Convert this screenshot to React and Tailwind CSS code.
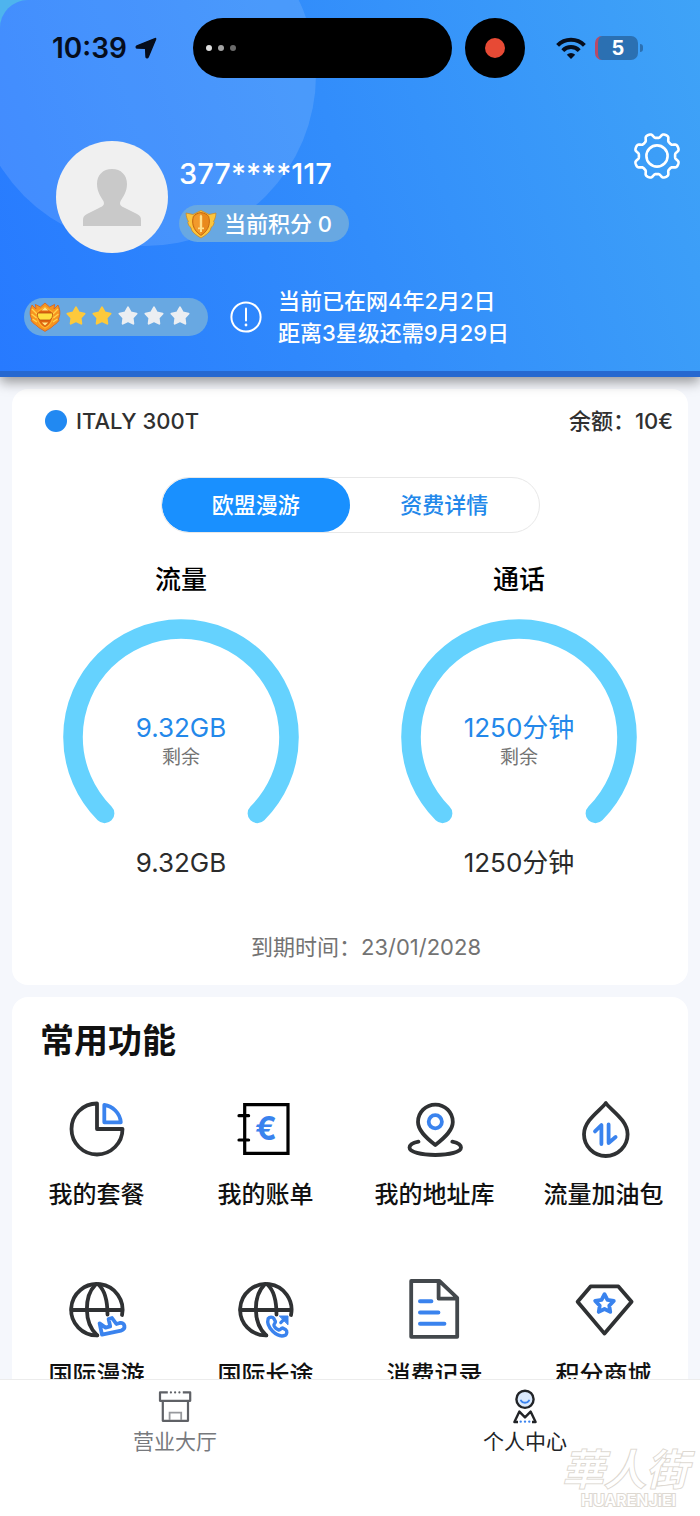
import React, { useState } from "react";

const polar = (cx, cy, r, angle) =>
  `${(cx + r * Math.sin(angle)).toFixed(2)} ${(cy - r * Math.cos(angle)).toFixed(2)}`;

// five-pointed star as a closed path
const starPath = (cx, cy, outer, inner) =>
  "M" +
  Array.from({ length: 10 }, (_, i) =>
    polar(cx, cy, i % 2 ? inner : outer, (i * Math.PI) / 5),
  ).join("L") +
  "Z";

// eight soft teeth, notches at the compass points
const gearPath =
  "M" +
  Array.from({ length: 160 }, (_, i) => {
    const t = (i * Math.PI) / 80;
    return polar(24, 24, 20.4 - 2.4 * Math.tanh(2 * Math.cos(8 * t)), t);
  }).join("L") +
  "Z";

const DARK = "#2f3133";
const BLUE = "#3a83ee";

const Icon = ({ children }) => (
  <svg
    viewBox="0 0 64 64"
    className="size-16"
    fill="none"
    stroke={DARK}
    strokeWidth="3.8"
    strokeLinecap="round"
    strokeLinejoin="round"
    aria-hidden="true"
  >
    {children}
  </svg>
);

const PieIcon = () => (
  <Icon>
    <path d="M32 6.5V32H57.5A25.5 25.5 0 1 1 32 6.5Z" />
    <path d="M39.3 8V25.3H55.8C55 16 47.5 9 39.3 8Z" stroke={BLUE} />
  </Icon>
);

const BillIcon = () => (
  <Icon>
    <path
      d="M10.7 7.6H54V56.4H10.7ZM5 18.7H14.6M5 43H14.6"
      stroke="#000"
      strokeWidth="3.2"
      strokeLinejoin="miter"
    />
    <text
      x="32"
      y="43"
      textAnchor="middle"
      fill={BLUE}
      stroke="none"
      className="font-['Inter',sans-serif] text-[32px] font-bold"
    >
      €
    </text>
  </Icon>
);

const AddressIcon = () => (
  <Icon>
    <path d="M32.3 48C22 40 15 33 15 25A17.4 17.4 0 0 1 49.8 25C49.8 33 42.6 40 32.3 48Z" />
    <circle cx="32.3" cy="24.7" r="6.6" stroke={BLUE} />
    <path d="M15.5 44.7C9.5 46 6.5 48.4 6.5 50.6C6.5 55 18 58 32.3 58S58 55 58 50.6C58 48.4 55 46 49.3 44.7" />
  </Icon>
);

const DropIcon = () => (
  <Icon>
    <path d="M33.8 6C29 13 12 23 12 37.2A21.8 21.8 0 0 0 55.6 37.2C55.6 23 38.6 13 33.8 6Z" />
    <path d="M23 34.4L29.4 28V47M36.6 27.5V46L43.6 40" stroke={BLUE} />
  </Icon>
);

const Globe = () => (
  <>
    <path d="M32.4 58.4A25.7 25.7 0 1 1 57 38" />
    <path d="M30.5 7.6C19 19 18.5 46 32 58.2M33.5 7.6C39.5 13 42.5 24 42.5 37.6M6.4 33H57" />
  </>
);

const RoamingIcon = () => (
  <Icon>
    <Globe />
    <path
      d="M34.6 46.4L37 57.6L56 53.6C61.5 52 60 45.2 54.8 46L51.4 47L47 41L43.6 42L45.2 49.4L40.6 50.6Z"
      stroke={BLUE}
    />
  </Icon>
);

const LongDistanceIcon = () => (
  <Icon>
    <Globe />
    <path
      d="M34.2 41.6C35.6 39.8 38.6 39.6 39.8 41.4L41.4 44.6C41.6 46.4 39.4 46.8 40 48.6C41 50.8 42.6 52.4 44.8 53C46.6 53.2 46.6 51 48.6 51L51.8 52.8C53.4 54 53 57.2 51.4 58.2C43 61.6 31.6 50 34.2 41.6Z"
      stroke={BLUE}
      strokeWidth="3.4"
    />
    <path d="M46.8 45.6L50 42.4" stroke={BLUE} strokeWidth="3.2" />
    <path d="M45.6 39H54V47.4Z" fill={BLUE} stroke={BLUE} strokeWidth="1" />
  </Icon>
);

const RecordIcon = () => (
  <Icon>
    <path d="M8.2 4H36.4L54.2 20.8V59.8H8.2ZM35.6 4.4V21.6H53.6" stroke="#43484c" />
    <path d="M17 24.2H28.4M17 35.4H35.4M17 46.8H41.4" stroke={BLUE} strokeWidth="4" />
  </Icon>
);

const MallIcon = () => (
  <Icon>
    <path d="M18.6 9.4H46.4L59.6 24.7L32.5 56.6L5.6 24.7Z" />
    <path d={starPath(32.5, 27, 9.8, 5)} stroke={BLUE} />
  </Icon>
);

const StoreIcon = () => (
  <svg viewBox="0 0 40 36" className="h-9 w-10" fill="none" stroke="#5f6166" strokeWidth="2.2" aria-hidden="true">
    <path d="M12.8 4.4H5V12.8H35.2V4.4H27.8" strokeLinejoin="round" />
    <path d="M7.8 12.8V32.8H33V12.8" strokeLinejoin="round" />
    <path d="M14.6 32V24.6H26.2V32" stroke="#97999d" strokeWidth="1.8" />
    <path d="M15.9 4.4h.01M20.1 4.4h.01M24.4 4.4h.01" strokeLinecap="round" />
  </svg>
);

const PersonIcon = () => (
  <svg viewBox="0 0 40 36" className="h-9 w-10" fill="none" stroke="#222427" strokeWidth="2.4" aria-hidden="true">
    <circle cx="20" cy="11.3" r="8.6" fill="#dbe9fb" />
    <path d="M16 12.6C17.6 15.6 22.4 15.6 24 12.6" stroke={BLUE} strokeWidth="2" strokeLinecap="round" />
    <path d="M13 34H9.4L14.4 23.6L20 29.4L25.6 23.6L30.6 34H27" strokeLinejoin="round" />
    <path d="M15.7 33.6h.01M20 33.6h.01M24.3 33.6h.01" stroke={BLUE} strokeLinecap="round" />
  </svg>
);

const PointsBadge = () => (
  <svg viewBox="0 0 32 30" className="h-[30px] w-8" aria-hidden="true">
    <path
      d="M1 4L8 5.5L16 1.5L24 5.5L31 4C30.6 8 30 10 28.6 12.4L29.2 13.4C28.6 16 27.6 17.4 26 18.6C25.6 23 21 26 16 29C11 26 6.4 23 6 18.6C4.4 17.4 3.4 16 2.8 13.4L3.4 12.4C2 10 1.4 8 1 4Z"
      fill="#fcc53d"
      stroke="#c98a2b"
      strokeWidth=".8"
    />
    <path
      d="M16 3.6C19 4 22 5 23.6 7.4C25.4 13 24.6 21 16 26.4C7.4 21 6.6 13 8.4 7.4C10 5 13 4 16 3.6Z"
      fill="#e98a1c"
      stroke="#c66a12"
    />
    <path d="M16 4.6V25.4C9 21 7.6 14 9.2 8C11 5.6 13.4 5 16 4.6Z" fill="#f29a2c" />
    <path d="M14.8 7L16 5.4L17.2 7V18.6H19V20.2H17V23H15V20.2H13V18.6H14.8Z" fill="#ffe08a" />
  </svg>
);

const LevelBadge = () => (
  <svg viewBox="0 0 32 30" className="h-[30px] w-8" aria-hidden="true">
    <path
      d="M3 3L7 7L6.4 2.4L11.4 5L16 1L20.6 5L25.6 2.4L25 7L29 3C31.8 9 31 14 29.4 17L30 18.4C28 21.6 25.4 22.4 24 24C22 26.4 18.6 27.4 16 29.4C13.4 27.4 10 26.4 8 24C6.6 22.4 4 21.6 2 18.4L2.6 17C1 14 .2 9 3 3Z"
      fill="#f7941f"
      stroke="#d9611a"
      strokeWidth=".8"
    />
    <path d="M3 7L8 12M2.6 12L7.6 16M3.6 17L8 20M29 7L24 12M29.4 12L24.4 16M28.4 17L24 20" stroke="#ffd34d" strokeWidth="1.4" />
    <path d="M16 5L23 9.6C25 15 23.6 21.6 16 26C8.4 21.6 7 15 9 9.6Z" fill="#e0660f" stroke="#ffb52e" strokeWidth="1.2" />
    <path d="M8.6 11H23.4C24 14 23 17.4 20.4 18H11.6C9 17.4 8 14 8.6 11Z" fill="#ffdf3e" stroke="#b94d10" strokeWidth=".8" />
    <path d="M12.4 8.6H19.6L16 5.6ZM12.8 20.4H19.2L16 23.6Z" fill="#ffe88a" />
  </svg>
);

const StatusBar = () => (
  <div className="grid grid-cols-[193fr_332px_175fr] pt-[18px]">
    <div className="flex items-center gap-2 pl-[52px]">
      <span className="text-[28px] font-semibold leading-8 text-[#060d1c]">10:39</span>
      <svg viewBox="0 0 22 22" className="size-[22px]" aria-hidden="true">
        <path
          d="M20 1.6L2 8.8C.8 9.4 1 11 2.2 11L10.6 11.4L11 19.8C11 21 12.6 21.2 13.2 20L20.6 2.2C20.8 1.6 20.4 1.4 20 1.6Z"
          fill="#060d1c"
          stroke="#060d1c"
          strokeWidth="1.4"
          strokeLinejoin="round"
        />
      </svg>
    </div>
    <div className="flex gap-[13px]">
      <div className="flex h-[60px] flex-1 items-center gap-[6px] rounded-full bg-black pl-[13px]">
        <span className="size-[6px] rounded-full bg-[#dedede]" />
        <span className="size-[6px] rounded-full bg-[#a3a3a3]" />
        <span className="size-[6px] rounded-full bg-[#6b6b6b]" />
      </div>
      <div className="flex size-[60px] items-center justify-center rounded-full bg-black">
        <span className="size-5 rounded-full bg-[#e74a35]" />
      </div>
    </div>
    <div className="flex items-center gap-[9px] pl-[31px]">
      <svg viewBox="0 0 30 23" className="h-[23px] w-[30px]" fill="none" stroke="#060d1c" strokeWidth="4" aria-hidden="true">
        <path d="M1.6 8.4A18.6 18.6 0 0 1 28.4 8.4" />
        <path d="M6.8 13.6A11.4 11.4 0 0 1 23.2 13.6" />
        <path d="M15 22L10.8 17.8A6 6 0 0 1 19.2 17.8Z" fill="#060d1c" stroke="none" />
      </svg>
      <div className="flex items-center gap-[2px]">
        <span className="flex h-6 w-[43px] items-center justify-center rounded-[7px] border-l-[3px] border-[#b94a66] bg-[#2b70b2] text-xl font-bold text-white">
          5
        </span>
        <span className="h-2 w-[3px] rounded-r-full bg-[#2b70b2]" />
      </div>
    </div>
  </div>
);

const Header = () => (
  <header className="relative z-10 bg-[#4eb4ee] shadow-[0_5px_12px_rgba(0,0,0,0.4)]">
    <div className="relative overflow-hidden rounded-tl-[28px] border-b-[6px] border-[#2668d0] bg-linear-[72deg] from-[#277aff] via-[#328dfb] to-[#3fa3f7] pb-[22px]">
      <div className="absolute -left-[26px] -top-24 size-[342px] rounded-full bg-white/12" />

      <div className="relative">
        <StatusBar />

        <div className="mt-[52px] flex items-start pl-14 pr-[19px]">
          <div className="mt-[11px] flex size-28 shrink-0 items-center justify-center rounded-full bg-[#f0f0f0]">
            <svg viewBox="0 0 60 60" className="size-[60px]" aria-hidden="true">
              <path
                d="M30 2C39 2 45 8 45 17C45 25 41 30 38.6 34C37 38 39 39 43 41L55 47C58 48.6 59 50 59 53V59H1V53C1 50 2 48.6 5 47L17 41C21 39 23 38 21.4 34C19 30 15 25 15 17C15 8 21 2 30 2Z"
                fill="#c9c9c9"
              />
            </svg>
          </div>
          <div className="ml-[11px] mt-[26px] flex flex-1 flex-col items-start gap-[13px]">
            <span className="text-[29px] font-medium leading-9 text-white">377****117</span>
            <div className="flex h-[37px] items-center gap-[7px] rounded-full bg-[#68a8e2] pl-[6px] pr-[17px]">
              <PointsBadge />
              <span className="text-[22px] font-medium leading-8 text-white">当前积分 0</span>
            </div>
          </div>
          <button type="button" aria-label="设置" className="mt-[2px] text-white">
            <svg viewBox="0 0 48 48" className="size-12" fill="none" stroke="currentColor" strokeWidth="2.6" strokeLinejoin="round">
              <path d={gearPath} />
              <circle cx="24" cy="24" r="10.6" />
            </svg>
          </button>
        </div>

        <div className="mt-8 flex items-center pl-6">
          <div className="flex h-[38px] items-center gap-1 rounded-full bg-[#68a8e2] pl-[5px] pr-[17px]">
            <LevelBadge />
            {[1, 2, 3, 4, 5].map((n) => (
              <svg key={n} viewBox="0 0 22 22" className="size-[22px]" aria-hidden="true">
                <path
                  d={starPath(11, 10.4, 9, 4.8)}
                  fill={n <= 2 ? "#fdc93c" : "#ebeef2"}
                  stroke={n <= 2 ? "#fdc93c" : "#ebeef2"}
                  strokeWidth="2"
                  strokeLinejoin="round"
                />
              </svg>
            ))}
          </div>
          <svg viewBox="0 0 32 32" className="ml-[22px] size-8" fill="none" stroke="#fff" strokeWidth="2" aria-hidden="true">
            <circle cx="16" cy="16" r="14.6" />
            <path d="M16 7.5V19.5" strokeLinecap="round" />
            <circle cx="16" cy="24" r="1.4" fill="#fff" stroke="none" />
          </svg>
          <p className="ml-4 text-[22px] font-medium leading-8 text-white">
            当前已在网4年2月2日
            <br />
            距离3星级还需9月29日
          </p>
        </div>
      </div>
    </div>
  </header>
);

const Gauge = ({ title, value }) => (
  <div className="flex flex-col items-center">
    <h3 className="text-[26px] font-medium leading-8 text-black">{title}</h3>
    <div className="mt-[23px] grid h-[205px] w-[236px]">
      <svg
        viewBox="0 0 236 205"
        className="col-start-1 row-start-1"
        fill="none"
        stroke="#65d2fe"
        strokeWidth="19.6"
        strokeLinecap="round"
        aria-hidden="true"
      >
        <path d="M41.6 194.4A108 108 0 1 1 194.4 194.4" />
      </svg>
      <div className="col-start-1 row-start-1 flex flex-col items-center pt-[93px]">
        <span className="text-[26px] leading-8 text-[#2388ea]">{value}</span>
        <span className="text-[19px] leading-7 text-[#737373]">剩余</span>
      </div>
    </div>
    <span className="mt-[23px] text-[26px] leading-8 text-[#2b2b2b]">{value}</span>
  </div>
);

const PlanCard = () => {
  const [tab, setTab] = useState("欧盟漫游");

  return (
    <section className="mx-3 mt-3 rounded-2xl bg-white pb-[22px] pt-4">
      <div className="flex items-center justify-between pl-[33px] pr-[15px] text-[22px] font-medium leading-8 text-[#303030]">
        <div className="flex items-center gap-[9px]">
          <span className="size-[22px] rounded-full bg-[#2189f2]" />
          <span>ITALY 300T</span>
        </div>
        <span>余额：10€</span>
      </div>

      <div className="mx-auto mt-10 flex h-14 w-[379px] overflow-hidden rounded-full border border-[#e8e8e8]">
        {["欧盟漫游", "资费详情"].map((name) => (
          <button
            key={name}
            type="button"
            onClick={() => setTab(name)}
            className={
              tab === name
                ? "flex-1 rounded-full bg-[#1990ff] text-[22px] font-medium text-white"
                : "flex-1 text-[22px] font-medium text-[#2388ea]"
            }
          >
            {name}
          </button>
        ))}
      </div>

      <div className="mt-[31px] grid grid-cols-2">
        <Gauge title="流量" value="9.32GB" />
        <Gauge title="通话" value="1250分钟" />
      </div>

      <p className="mt-[52px] pl-8 text-center text-[22px] leading-8 text-[#737373]">到期时间：23/01/2028</p>
    </section>
  );
};

const features = [
  { name: "我的套餐", icon: PieIcon },
  { name: "我的账单", icon: BillIcon },
  { name: "我的地址库", icon: AddressIcon },
  { name: "流量加油包", icon: DropIcon },
  { name: "国际漫游", icon: RoamingIcon },
  { name: "国际长途", icon: LongDistanceIcon },
  { name: "消费记录", icon: RecordIcon },
  { name: "积分商城", icon: MallIcon },
];

const FeatureCard = () => (
  <section className="mx-3 mt-3 rounded-2xl bg-white pb-6 pt-[21px]">
    <h2 className="pl-7 text-[34px] font-bold leading-[46px] text-[#111]">常用功能</h2>
    <div className="mt-[33px] grid grid-cols-4 gap-y-[66px]">
      {features.map(({ name, icon: FeatureIcon }) => (
        <a key={name} href="#" className="flex flex-col items-center gap-[18px]">
          <FeatureIcon />
          <span className="text-2xl font-medium leading-8 text-[#111]">{name}</span>
        </a>
      ))}
    </div>
  </section>
);

const TabBar = () => (
  <nav className="relative z-10 grid shrink-0 grid-cols-2 border-t border-[#ececec] bg-white pb-[59px] pt-2">
    <a href="#" className="flex flex-col items-center gap-[3px] text-[#77797d]">
      <StoreIcon />
      <span className="text-[21px] leading-[30px]">营业大厅</span>
    </a>
    <a href="#" className="flex flex-col items-center gap-[3px] text-[#222427]">
      <PersonIcon />
      <span className="text-[21px] leading-[30px]">个人中心</span>
    </a>
    {/* site mark */}
    <div className="absolute bottom-2 right-3 flex flex-col items-end text-white [-webkit-text-stroke:2px_#ddd8d1] [paint-order:stroke_fill]">
      <span className="text-[42px] font-medium italic leading-[44px]">華人街</span>
      <span className="pr-3 text-base font-semibold leading-4">HUARENJiEI</span>
    </div>
  </nav>
);

const App = () => {
  return (
    <div className="flex h-screen flex-col overflow-hidden bg-[#f5f7fc] font-['Inter','Noto_Sans_CJK_SC',sans-serif]">
      <main className="min-h-0 flex-1 overflow-hidden">
        <Header />
        <PlanCard />
        <FeatureCard />
      </main>
      <TabBar />
    </div>
  );
};

export default App;
